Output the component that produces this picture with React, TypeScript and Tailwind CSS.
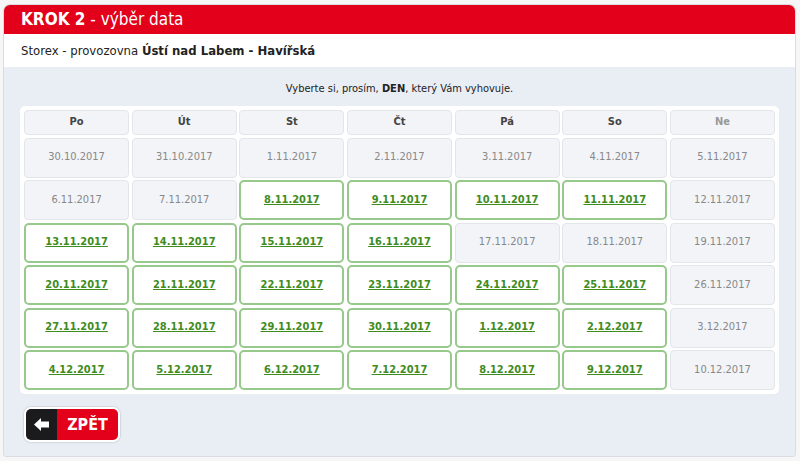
import React from "react";

type Day = { label: string; free: boolean };

const dayNames = ["Po", "Út", "St", "Čt", "Pá", "So", "Ne"];

// dostupné dny (zelené) podle kalendáře
const freeDays = new Set([
  "8.11.2017", "9.11.2017", "10.11.2017", "11.11.2017",
  "13.11.2017", "14.11.2017", "15.11.2017", "16.11.2017",
  "20.11.2017", "21.11.2017", "22.11.2017", "23.11.2017", "24.11.2017", "25.11.2017",
  "27.11.2017", "28.11.2017", "29.11.2017", "30.11.2017", "1.12.2017", "2.12.2017",
  "4.12.2017", "5.12.2017", "6.12.2017", "7.12.2017", "8.12.2017", "9.12.2017",
]);

function buildDays(): Day[] {
  const out: Day[] = [];
  const start = new Date(2017, 9, 30);
  for (let i = 0; i < 42; i++) {
    const d = new Date(start.getFullYear(), start.getMonth(), start.getDate() + i);
    const label = `${d.getDate()}.${d.getMonth() + 1}.${d.getFullYear()}`;
    out.push({ label, free: freeDays.has(label) });
  }
  return out;
}

export default function App() {
  const days = buildDays();

  return (
    <div
      className="h-[461px] w-[800px] overflow-hidden bg-[#f6f6f6] pl-[3px] pr-[4px] pt-[4px]"
      style={{ fontFamily: '"DejaVu Sans Condensed", "Noto Sans", "Liberation Sans", sans-serif' }}
    >
      <div className="flex h-[453px] flex-col overflow-hidden rounded-t-[7px] rounded-b-[3px] border border-[#d9dde3] bg-[#e9edf4]">
        <div className="flex h-[29px] items-center bg-[#e2001a] px-[17px] text-[17px] leading-none text-white">
          <span className="font-bold">KROK 2</span>
          <span>&nbsp;- výběr data</span>
        </div>

        <div className="flex h-[33px] items-center bg-white px-[17px] text-[13px] text-[#222]">
          Storex - provozovna&nbsp;<b>Ústí nad Labem - Havířská</b>
        </div>

        <div className="px-[16px]">
          <p className="pt-[14px] pb-[9px] text-center text-[11px] leading-[16px] text-[#222]">
            Vyberte si, prosím, <b>DEN</b>, který Vám vyhovuje.
          </p>

          <div className="rounded-[5px] bg-white p-[4px]">
            <div className="grid grid-cols-7 gap-[2.5px]">
              {dayNames.map((n) => (
                <div
                  key={n}
                  className={`flex h-[25px] items-center justify-center rounded-[4px] border border-[#e2e5ea] bg-[#f2f4f8] text-[11px] font-bold ${
                    n === "Ne" ? "text-[#999]" : "text-[#444]"
                  }`}
                >
                  {n}
                </div>
              ))}
              {days.map((d) =>
                d.free ? (
                  <div
                    key={d.label}
                    className="flex h-[40px] items-center justify-center rounded-[5px] border-2 border-[#98c98c] bg-white"
                  >
                    <a href="#" className="text-[11px] font-bold text-[#3f8c1e] underline">
                      {d.label}
                    </a>
                  </div>
                ) : (
                  <div
                    key={d.label}
                    className="flex h-[40px] items-center justify-center rounded-[4px] border border-[#e2e5ea] bg-[#f2f4f8] text-[11px] text-[#888]"
                  >
                    {d.label}
                  </div>
                )
              )}
            </div>
          </div>

          <div className="pt-[13px] pl-[4px]">
            <button className="flex h-[35px] w-[96px] overflow-hidden rounded-[7px] border-2 border-white shadow-[0_0_2px_rgba(0,0,0,0.3)]">
              <span className="flex h-full w-[31px] items-center justify-center bg-[#1b1a1c]">
                <svg width="15" height="13" viewBox="0 0 15 13">
                  <path d="M0 6.5 L7 0 V3.5 H15 V9.5 H7 V13 Z" fill="#fff" />
                </svg>
              </span>
              <span className="flex h-full flex-1 items-center justify-center bg-[#e2001a] text-[16px] font-bold text-white">
                ZPĚT
              </span>
            </button>
          </div>
        </div>
      </div>
    </div>
  );
}
